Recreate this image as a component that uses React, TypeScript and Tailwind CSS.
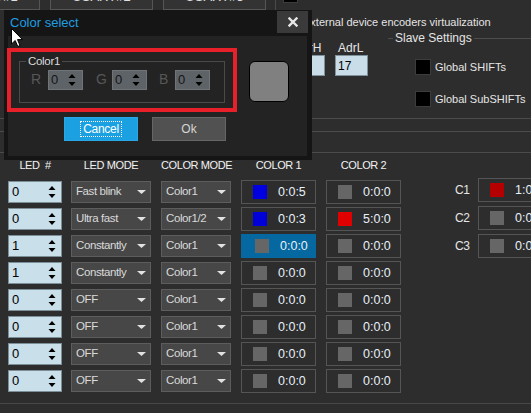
import React from 'react';

const GRAY = '#666666';

type Row = {
  led: string;
  mode: string;
  cm: string;
  c1: string;
  t1: string;
  c2: string;
  t2: string;
  sel?: boolean;
};

const rows: Row[] = [
  { led: '0', mode: 'Fast blink', cm: 'Color1', c1: '#0000e0', t1: '0:0:5', c2: GRAY, t2: '0:0:0' },
  { led: '0', mode: 'Ultra fast', cm: 'Color1/2', c1: '#0000d8', t1: '0:0:3', c2: '#e00000', t2: '5:0:0' },
  { led: '1', mode: 'Constantly', cm: 'Color1', c1: GRAY, t1: '0:0:0', c2: GRAY, t2: '0:0:0', sel: true },
  { led: '1', mode: 'Constantly', cm: 'Color1', c1: GRAY, t1: '0:0:0', c2: GRAY, t2: '0:0:0' },
  { led: '0', mode: 'OFF', cm: 'Color1', c1: GRAY, t1: '0:0:0', c2: GRAY, t2: '0:0:0' },
  { led: '0', mode: 'OFF', cm: 'Color1', c1: GRAY, t1: '0:0:0', c2: GRAY, t2: '0:0:0' },
  { led: '0', mode: 'OFF', cm: 'Color1', c1: GRAY, t1: '0:0:0', c2: GRAY, t2: '0:0:0' },
  { led: '0', mode: 'OFF', cm: 'Color1', c1: GRAY, t1: '0:0:0', c2: GRAY, t2: '0:0:0' },
];

const slots = [
  { label: 'C1', color: '#b40000', text: '1:0:0' },
  { label: 'C2', color: GRAY, text: '0:0:0' },
  { label: 'C3', color: GRAY, text: '0:0:0' },
];

function SpinArrows({ color }: { color: string }) {
  return (
    <svg width="8" height="12" viewBox="0 0 8 12" className="shrink-0">
      <path d="M4 0 L7.5 4 L0.5 4 Z" fill={color} />
      <path d="M0.5 8 L7.5 8 L4 12 Z" fill={color} />
    </svg>
  );
}

function LedSpin({ value }: { value: string }) {
  return (
    <div className="w-[54px] h-[22px] shrink-0 bg-[#c9dfea] border border-[#7c8f99] flex items-center pl-[3px] pr-[5px] text-[13px] text-black">
      <span className="flex-1">{value}</span>
      <SpinArrows color="#000000" />
    </div>
  );
}

function Combo({ text, w }: { text: string; w: string }) {
  return (
    <div
      className={`${w} h-[22px] shrink-0 bg-[#474747] border border-[#5d5d5d] flex items-center pl-[4px] pr-[4px] text-[11.5px] tracking-[-0.4px] text-[#dadada]`}
    >
      <span className="flex-1 whitespace-nowrap overflow-hidden">{text}</span>
      <svg width="9" height="4" viewBox="0 0 9 4" className="shrink-0">
        <path d="M0 0 H9 L4.5 4 Z" fill="#e2e2e2" />
      </svg>
    </div>
  );
}

function ColorCell({ color, text, sel }: { color: string; text: string; sel?: boolean }) {
  return (
    <div
      className={
        sel
          ? 'w-[75px] h-[24px] shrink-0 border border-[#0568a0] bg-[#0568a0] flex items-center'
          : 'w-[75px] h-[24px] shrink-0 border border-[#555555] flex items-center'
      }
    >
      <span className={sel ? 'ml-[13px] w-[14px] h-[14px] shrink-0' : 'ml-[11px] w-[14px] h-[14px] shrink-0'} style={{ background: color }} />
      <span className="ml-[11px] text-[12.5px] text-[#e8f0fa] whitespace-nowrap">{text}</span>
    </div>
  );
}

function DlgSpin({ value }: { value: string }) {
  return (
    <div className="w-[35px] h-[20px] shrink-0 bg-[#5d6367] border border-[#6e7478] flex items-center pl-[2px] pr-[6px] text-[13px] text-[#151515]">
      <span className="flex-1">{value}</span>
      <SpinArrows color="#000000" />
    </div>
  );
}

function TopBtn({ label }: { label: string }) {
  return (
    <div className="w-[103px] h-[30px] shrink-0 bg-[#333333] border border-[#555555] flex items-end justify-center pb-[5px] text-[13px] leading-[14px] text-[#e0e0e0]">
      {label}
    </div>
  );
}

function BlackBox() {
  return <div className="w-[16px] h-[16px] shrink-0 bg-black border border-[#3c3c3c]" />;
}

export default function App() {
  return (
    <div className="relative w-[531px] h-[413px] overflow-hidden bg-[#2d2d2d] font-['Liberation_Sans',Arial,sans-serif] text-[#e6e6e6]">
      {/* top section */}
      <div className="flex h-[118px]">
        <div className="w-[276px] shrink-0 border-r border-[#4a4a4a] flex flex-col">
          <div className="-mt-[20px] -ml-[63px] flex gap-[10px] h-[30px]">
            <TopBtn label="USART#1" />
            <TopBtn label="USART#2" />
            <TopBtn label="USART#3" />
          </div>
        </div>
        <div className="flex-1 flex flex-col pl-[7px]">
          <div className="-mt-[12px] w-[15px] h-[15px] bg-black border border-[#3c3c3c]" />
          <div className="mt-[12px] flex items-center h-[14px] gap-[6px]">
            <div className="w-[14px] h-[14px] shrink-0 bg-black border border-[#3c3c3c]" />
            <span className="text-[11px] whitespace-nowrap text-[#e4e4e4]">External device encoders virtualization</span>
          </div>
          <div className="flex mt-[3px]">
            <div className="ml-[9px] flex gap-[10px] pt-[9px] shrink-0">
              <div className="w-[33px] flex flex-col">
                <span className="text-[12px] leading-[14px] pl-[2px]">AdrH</span>
                <div className="h-[21px] bg-[#c8dde8] border border-[#7e919c] pl-[2px] flex items-center text-[12px] text-black"></div>
              </div>
              <div className="w-[33px] flex flex-col">
                <span className="text-[12px] leading-[14px] pl-[3px]">AdrL</span>
                <div className="h-[21px] bg-[#c8dde8] border border-[#7e919c] pl-[2px] flex items-center text-[12px] text-black">17</div>
              </div>
            </div>
            <fieldset className="ml-[20px] flex-1 border-t border-[#4d4d4d] min-w-0">
              <legend className="ml-[5px] px-[2px] text-[12px] leading-[12px] text-[#e4e4e4] whitespace-nowrap">Slave Settings</legend>
              <div className="mt-[15px] pl-[27px] flex flex-col gap-[15px]">
                <div className="flex items-center gap-[4px]">
                  <BlackBox />
                  <span className="text-[11px] whitespace-nowrap">Global SHIFTs</span>
                </div>
                <div className="flex items-center gap-[4px]">
                  <BlackBox />
                  <span className="text-[11px] whitespace-nowrap">Global SubSHIFTs</span>
                </div>
              </div>
            </fieldset>
          </div>
        </div>
      </div>

      <div className="h-[13px] border-t border-[#4b4b4b]" />
      <div className="h-[21px] border-t border-[#4b4b4b]" />

      {/* table */}
      <div className="border-t border-[#4b4b4b]">
        <div className="flex pl-[8px]">
          <div className="flex flex-col gap-[3px] shrink-0">
            <div className="h-[24px] flex items-center text-[11px] tracking-[-0.4px] text-[#f2f2f2] whitespace-nowrap">
              <div className="w-[54px] shrink-0 text-center whitespace-pre">LED  #</div>
              <div className="ml-[9px] w-[80px] shrink-0 text-center">LED MODE</div>
              <div className="ml-[10px] w-[70px] shrink-0 text-center">COLOR MODE</div>
              <div className="ml-[10px] w-[75px] shrink-0 text-center">COLOR 1</div>
              <div className="ml-[10px] w-[75px] shrink-0 text-center">COLOR 2</div>
            </div>
            {rows.map((r, i) => (
              <div key={i} className="h-[24px] flex items-center">
                <LedSpin value={r.led} />
                <div className="ml-[9px]">
                  <Combo text={r.mode} w="w-[80px]" />
                </div>
                <div className="ml-[10px]">
                  <Combo text={r.cm} w="w-[70px]" />
                </div>
                <div className="ml-[10px]">
                  <ColorCell color={r.c1} text={r.t1} sel={r.sel} />
                </div>
                <div className="ml-[10px]">
                  <ColorCell color={r.c2} text={r.t2} />
                </div>
              </div>
            ))}
          </div>
          <div className="ml-[54px] pt-[25px] flex flex-col gap-[4px] shrink-0">
            {slots.map((s) => (
              <div key={s.label} className="h-[24px] flex items-center">
                <span className="w-[23px] shrink-0 text-[12px] tracking-[-0.3px] text-[#e6e6e6]">{s.label}</span>
                <ColorCell color={s.color} text={s.text} />
              </div>
            ))}
          </div>
        </div>
        <div className="mt-[10px] border-t border-[#474747]" />
      </div>

      {/* dialog */}
      <div className="absolute left-[4px] top-[10px] w-[308px] h-[150px] bg-[#151515] flex flex-col">
        <div className="h-[26px] flex items-start shrink-0">
          <span className="pl-[6px] h-[26px] flex items-center text-[13px] text-[#1e9ee0]">Color select</span>
          <div className="ml-auto mr-[4px] mt-[1px] w-[31px] h-[22px] bg-[#3a3a3a] flex items-center justify-center">
            <svg width="10" height="10" viewBox="0 0 10 10">
              <path d="M1.5 1.5 L8.5 8.5 M8.5 1.5 L1.5 8.5" stroke="#e6e6e6" strokeWidth="2.4" strokeLinecap="square" />
            </svg>
          </div>
        </div>
        <div className="ml-[4px] mr-[5px] mb-[4px] flex-1 bg-[#232323] pt-[19px] pl-[11px]">
          <div className="flex items-start">
            <fieldset className="w-[206px] shrink-0 border border-[#4a4a4a]">
              <legend className="ml-[6px] px-[2px] text-[11.5px] tracking-[-0.3px] leading-[12px] text-[#dcdcdc]">Color1</legend>
              <div className="flex items-center pt-[2px] pb-[12px] pl-[11px]">
                <span className="w-[17px] shrink-0 text-[14px] text-[#575757]">R</span>
                <DlgSpin value="0" />
                <span className="ml-[13px] w-[16px] shrink-0 text-[14px] text-[#575757]">G</span>
                <DlgSpin value="0" />
                <span className="ml-[12px] w-[16px] shrink-0 text-[14px] text-[#575757]">B</span>
                <DlgSpin value="0" />
              </div>
            </fieldset>
            <div className="ml-[24px] mt-[6px] w-[40px] h-[41px] shrink-0 bg-[#808080] border border-black rounded-[6px]" />
          </div>
          <div className="mt-[14px] pl-[45px] flex gap-[14px]">
            <div className="w-[74px] h-[24px] bg-[#1ba1e2] border border-[#2aa8e6] flex items-center justify-center">
              <span className="border border-dotted border-white px-[2px] h-[16px] flex items-center text-[12px] tracking-[-0.3px] text-white">Cancel</span>
            </div>
            <div className="w-[74px] h-[24px] bg-[#515151] border border-[#666666] flex items-center justify-center text-[12px] text-[#d6d6d6]">
              Ok
            </div>
          </div>
        </div>
      </div>

      {/* red annotation box */}
      <div className="absolute left-[7px] top-[48px] w-[230px] h-[64px] border-[4px] border-[#e8202a]" />

      {/* mouse cursor */}
      <svg className="absolute left-[11px] top-[28px]" width="13" height="20" viewBox="0 0 13 20">
        <path d="M0.5 0.5 L0.5 16 L4.2 12.5 L6.8 18.5 L9 17.5 L6.5 11.6 L11.5 11.6 Z" fill="#ffffff" stroke="#000000" strokeWidth="1" strokeLinejoin="miter" />
      </svg>
    </div>
  );
}
